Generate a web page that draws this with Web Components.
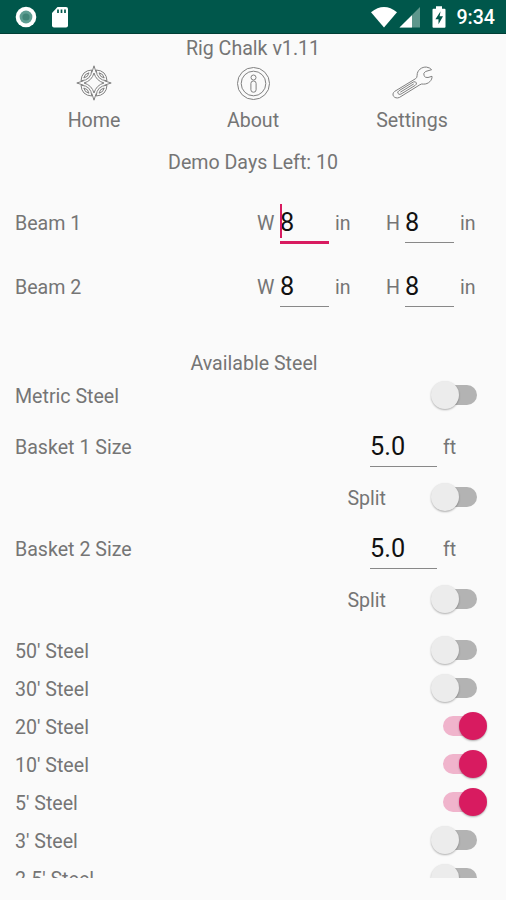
<!DOCTYPE html>
<html lang="en">
<head>
<meta charset="utf-8">
<title>Rig Chalk</title>
<style>
    body{
        margin: 0;
        background: #fafafa;
        color: #757575;
        font-family: Roboto, "Liberation Sans", sans-serif;
        font-size: 19.6px;
        line-height: 23px;
    }
</style>
</head>
<body>
<rig-app></rig-app>

<script>
function define(name, html, setup){
    const template = document.createElement('template');
    template.innerHTML = html;
    customElements.define(name, class extends HTMLElement {
        constructor(){
            super();
            this.attachShadow({mode:'open'});
            this.shadowRoot.appendChild(template.content.cloneNode(true));
        }
        connectedCallback(){
            if(setup) setup(this, this.shadowRoot);
        }
    });
}

// system bar
define('status-bar', `
    <style>
        :host{
            display: flex;
            align-items: center;
            box-sizing: border-box;
            height: 34px;
            padding: 0 11px 0 15px;
            background: #00574b;
            border-bottom: 1px solid #003f35;
            color: #fff;
            font-weight: 500;
        }
        svg{ display: block; }
        .sd{ margin-left: 14px; }
        .wifi{ margin-left: auto; }
        .signal{ margin-left: 1px; }
        .battery{ margin: 0 10px 0 11px; }
        span{ position: relative; top: 1px; }
    </style>
    <svg width="22" height="22" viewBox="0 0 22 22"><circle cx="11" cy="11" r="10.3" fill="#fff"/><circle cx="11" cy="11" r="6.4" fill="#5f9e93"/><circle cx="11" cy="11" r="3.6" fill="#418578"/></svg>
    <svg class="sd" width="18" height="22" viewBox="0 0 18 22"><path d="M6.5 1H15a2 2 0 0 1 2 2v16.5a2 2 0 0 1-2 2H3a2 2 0 0 1-2-2V7z" fill="#fff"/><path d="M7 3.5v3.5M10.5 3.5v3.5M14 3.5v3.5" stroke="#00574b" stroke-width="1.7"/></svg>
    <svg class="wifi" width="28" height="22" viewBox="0 0 28 22"><path d="M1 6.3Q14-4.3 27 6.3L14 21.5z" fill="#fff"/></svg>
    <svg class="signal" width="22" height="22" viewBox="0 0 22 22"><path d="M21 1v20.5H.5z" fill="#5d978c"/><path d="M13 9.2v12.3H.5z" fill="#fff"/></svg>
    <svg class="battery" width="14" height="22" viewBox="0 0 14 22"><path d="M4 .3h6v2.4h2.5q1 0 1 1v17q0 1-1 1h-11q-1 0-1-1v-17q0-1 1-1H4z" fill="#fff"/><path d="M8.6 5.3L3.4 13.3h3.1v5l4.5-8H7.6z" fill="#00574b"/></svg>
    <span>9:34</span>
`);

define('nav-item', `
    <style>
        :host{
            display: flex;
            flex-direction: column;
            align-items: center;
            gap: 8px;
        }
        ::slotted(svg){
            display: block;
            fill: none;
            stroke: #808080;
            stroke-width: 1;
        }
    </style>
    <slot name="icon"></slot>
    <span><slot></slot></span>
`);

define('number-field', `
    <style>
        :host{
            display: flex;
            align-items: center;
            position: relative;
            box-sizing: border-box;
            width: 49px;
            height: 40px;
            border-bottom: 1.4px solid #888;
            color: #111;
            font-size: 25.3px;
        }
        :host([wide]){ width: 67px; }
        :host([focused])::before{
            content: "";
            position: absolute;
            left: 0;
            top: 1px;
            width: 2px;
            height: 34px;
            background: #d81b60;
        }
        :host([focused])::after{
            content: "";
            position: absolute;
            left: 0;
            right: 0;
            bottom: -2px;
            height: 3px;
            background: #d81b60;
        }
    </style>
    <slot></slot>
`);

define('toggle-switch', `
    <style>
        :host{
            display: block;
            position: relative;
            width: 57px;
            height: 28px;
        }
        .track{
            position: absolute;
            left: 12px;
            top: 4px;
            width: 34px;
            height: 20px;
            border-radius: 10px;
            background: #b3b3b3;
        }
        .thumb{
            position: absolute;
            left: 0;
            top: 0;
            width: 28px;
            height: 28px;
            border-radius: 50%;
            background: #ececec;
            box-shadow: 0 1px 2px rgba(0, 0, 0, 0.3);
        }
        :host([checked]) .track{ background: #f0b4cc; }
        :host([checked]) .thumb{
            left: 28px;
            background: #d81b60;
        }
    </style>
    <div class="track"></div>
    <div class="thumb"></div>
`, (el) => {
    el.onclick = () => el.toggleAttribute('checked');
});

define('beam-row', `
    <style>
        :host{
            display: flex;
            align-items: center;
            height: 64px;
            padding: 0 31px 0 15px;
        }
        .label{ flex: 1; }
        .unit{ width: 57px; padding-left: 6px; box-sizing: border-box; }
        .unit:last-child{ width: 21px; }
        .dim{ width: 23px; }
        .dim.h{ width: 19px; }
    </style>
    <span class="label"><slot></slot></span>
    <span class="dim">W</span><number-field class="w">8</number-field><span class="unit">in</span>
    <span class="dim h">H</span><number-field>8</number-field><span class="unit">in</span>
`, (el, root) => {
    if(el.hasAttribute('focused')) root.querySelector('.w').setAttribute('focused', '');
});

define('basket-row', `
    <style>
        :host{ display: block; }
        div{
            display: flex;
            align-items: center;
            height: 51px;
            padding: 0 18px 0 15px;
        }
        .label{ flex: 1; }
        .size{ padding-right: 24px; }
        .unit{ width: 45px; padding-left: 6px; box-sizing: border-box; }
        .split{ justify-content: flex-end; gap: 45px; }
        toggle-switch{ margin-top: -2px; }
    </style>
    <div class="size">
        <span class="label"><slot></slot></span>
        <number-field wide>5.0</number-field>
        <span class="unit">ft</span>
    </div>
    <div class="split"><span>Split</span><toggle-switch></toggle-switch></div>
`);

define('steel-row', `
    <style>
        :host{
            display: flex;
            align-items: center;
            justify-content: space-between;
            flex: none;
            height: 38px;
            padding: 0 18px 0 15px;
        }
        toggle-switch{ margin-top: -2px; }
    </style>
    <span><slot></slot></span>
    <toggle-switch></toggle-switch>
`, (el, root) => {
    if(el.hasAttribute('checked')) root.querySelector('toggle-switch').setAttribute('checked', '');
});

define('rig-app', `
    <style>
        :host{
            display: flex;
            flex-direction: column;
            width: 506px;
            height: 900px;
            overflow: hidden;
        }
        .title, .demo, .heading{
            display: flex;
            align-items: center;
            justify-content: center;
            flex: none;
        }
        .title{ height: 29px; }
        nav{
            display: grid;
            grid-template-columns: repeat(3, 1fr);
            height: 76px;
            padding: 2px 14.5px 0;
        }
        .demo{ height: 42px; }
        .beams{ padding: 8px 0 30px; }
        .heading{ height: 28px; margin-left: 2px; }
        .baskets{ padding: 6.5px 0; }
        .list{
            height: 246px;
            overflow: hidden;
        }
    </style>
    <status-bar></status-bar>
    <div class="title">Rig Chalk v1.11</div>
    <nav>
        <nav-item>
            <svg slot="icon" width="36" height="36" viewBox="0 0 36 36">
                <g id="quarter">
                    <path d="M18 .8L20.2 7.6M28.4 15.8L35.2 18"/>
                    <path d="M18 8Q20.2 15.8 28 18"/>
                    <path d="M20.2 5Q30.4 5.6 31 15.8Q20.8 15.2 20.2 5z"/>
                    <path d="M23 7.8Q27.4 8.6 28.2 13Q23.8 12.2 23 7.8z"/>
                </g>
                <use href="#quarter" transform="rotate(90 18 18)"/>
                <use href="#quarter" transform="rotate(180 18 18)"/>
                <use href="#quarter" transform="rotate(270 18 18)"/>
            </svg>
            Home
        </nav-item>
        <nav-item>
            <svg slot="icon" width="36" height="36" viewBox="0 0 36 36">
                <circle cx="18.5" cy="18.5" r="16"/>
                <circle cx="18.5" cy="18.5" r="12.3"/>
                <circle cx="18.5" cy="12.5" r="2.5"/>
                <rect x="15.9" y="16" width="5.2" height="11.2" rx="2.4"/>
            </svg>
            About
        </nav-item>
        <nav-item>
            <svg slot="icon" width="42" height="36" viewBox="0 0 42 36">
                <path d="M3.8 26.3L24.6 13.7Q26.2 12.5 26.1 10.5C26 5 31 1.7 35.5 2.1Q39 2.6 40.6 4.7L34.5 6.5Q32 8 33 10.7Q34.3 13 37 12.5L41 11.3C41.5 15 37.5 19.3 32.5 19.1Q30.5 18.6 28.8 19.8L8.3 32.5C3.5 34.5-.5 29.5 3.8 26.3z"/>
                <path d="M8 25.7L22.5 16.9Q24.8 16.2 25.4 18Q25.6 19.4 24.3 20.3L9.8 29.2Q7.7 29.9 6.8 28.2Q6.4 26.8 8 25.7z"/>
                <path d="M9.3 27.2L22.8 18.9"/>
            </svg>
            Settings
        </nav-item>
    </nav>
    <div class="demo">Demo Days Left: 10</div>
    <div class="beams">
        <beam-row focused>Beam 1</beam-row>
        <beam-row>Beam 2</beam-row>
    </div>
    <div class="heading">Available Steel</div>
    <steel-row>Metric Steel</steel-row>
    <div class="baskets">
        <basket-row>Basket 1 Size</basket-row>
        <basket-row>Basket 2 Size</basket-row>
    </div>
    <div class="list">
        <steel-row>50' Steel</steel-row>
        <steel-row>30' Steel</steel-row>
        <steel-row checked>20' Steel</steel-row>
        <steel-row checked>10' Steel</steel-row>
        <steel-row checked>5' Steel</steel-row>
        <steel-row>3' Steel</steel-row>
        <steel-row>2.5' Steel</steel-row>
    </div>
`);
</script>
</body>
</html>
